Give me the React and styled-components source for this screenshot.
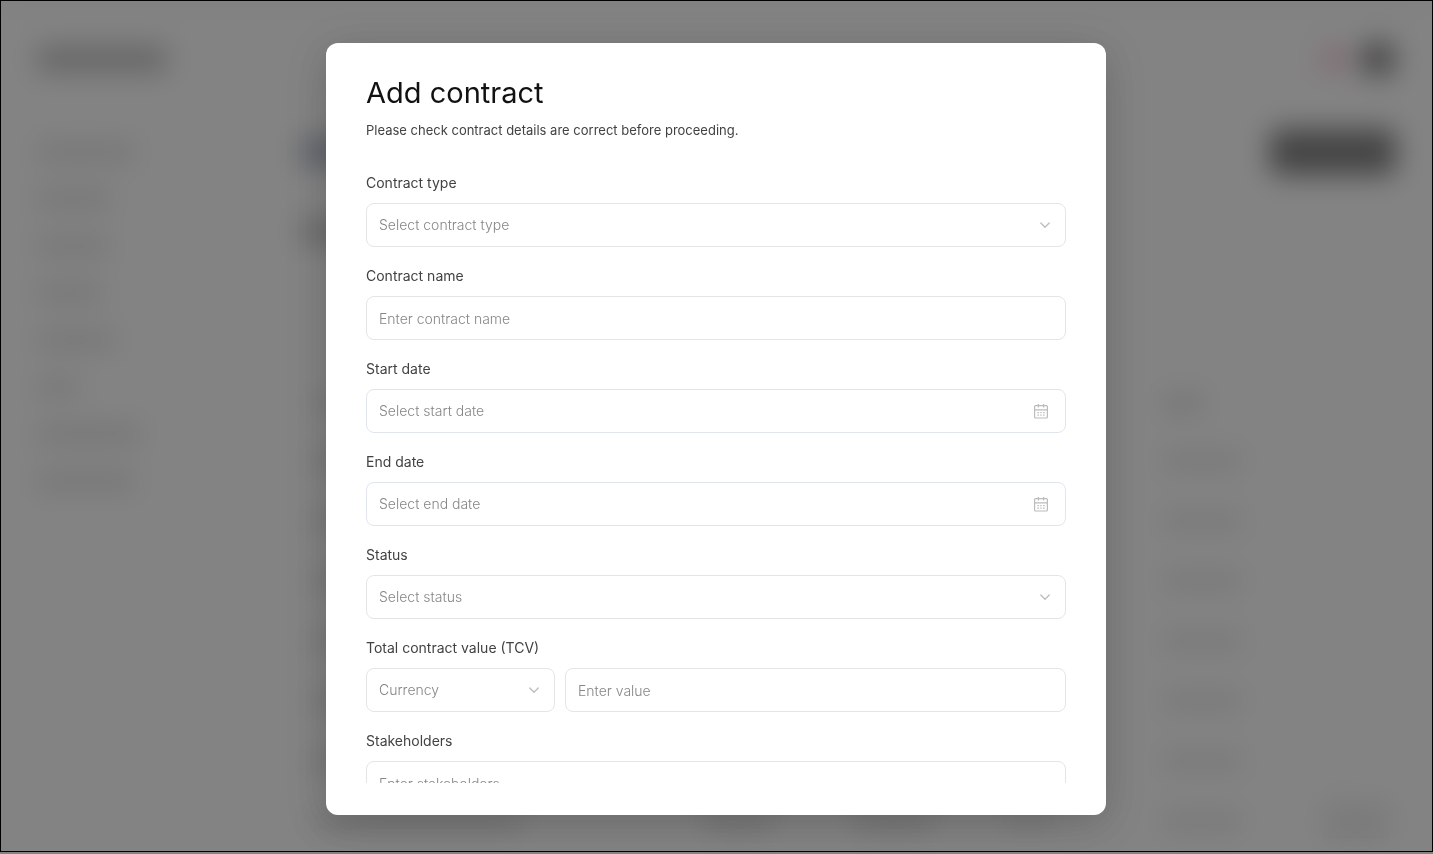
import React from "react";
import styled, { createGlobalStyle } from "styled-components";

const GlobalStyle = createGlobalStyle`
  * {
    box-sizing: border-box;
  }

  body {
    margin: 0;
    background: #838383;
    font-family: Inter, "Liberation Sans", sans-serif;
    font-size: 14px;
    color: #424242;
  }
`;

// App shell: the page and the modal layer share one grid cell
const Frame = styled.div`
  display: grid;
  grid-template-columns: minmax(0, 1fr);
  grid-template-rows: minmax(0, 1fr);
  height: calc(100vh - 2px);
  border: 1px solid #000;
  overflow: hidden;
`;

const Page = styled.div`
  grid-area: 1 / 1;
  display: flex;
  flex-direction: column;
  background: #fff;
  overflow: hidden;
`;

const TopBar = styled.header`
  display: flex;
  justify-content: space-between;
  align-items: center;
  height: 116px;
  flex: none;
  padding: 0 36px;
`;

const UserArea = styled.div`
  display: flex;
  align-items: center;
  gap: 12px;
`;

const Badge = styled.span`
  width: 28px;
  height: 24px;
  border-radius: 12px;
  background: #f08ca2;
`;

const Avatar = styled.span`
  width: 36px;
  height: 36px;
  border-radius: 50%;
  background: #0c0c0c;
`;

const Columns = styled.div`
  display: flex;
  flex: 1;
`;

const SideNav = styled.nav`
  display: flex;
  flex-direction: column;
  gap: 29px;
  width: 260px;
  flex: none;
  padding: 26px 36px;
`;

const Main = styled.main`
  flex: 1;
  display: flex;
  flex-direction: column;
  padding: 12px 36px 0 40px;
`;

const MainHead = styled.div`
  display: flex;
  justify-content: space-between;
  align-items: center;
`;

const Action = styled.span`
  width: 126px;
  height: 46px;
  border-radius: 8px;
  background: #080808;
`;

const Section = styled.div`
  padding: 44px 0 130px;
`;

const Row = styled.div`
  display: grid;
  grid-template-columns: 390px 150px 150px 160px 160px 1fr;
  align-items: center;
  height: ${(props) => (props.$head ? 56 : 60)}px;
  flex: none;
  padding-left: 12px;
`;

const Bar = styled.span`
  display: block;
  width: ${(props) => props.$w}px;
  height: ${(props) => props.$h || 18}px;
  border-radius: 4px;
  background: ${(props) => props.$color || "#000"};
  opacity: ${(props) => props.$tone};
`;

const Backdrop = styled.div`
  grid-area: 1 / 1;
  z-index: 1;
  display: flex;
  justify-content: center;
  padding: 42px 25px 36px 24px;
  background: rgba(90, 90, 90, 0.75);
  backdrop-filter: blur(14px);
`;

const Dialog = styled.section`
  display: flex;
  flex-direction: column;
  width: 100%;
  max-width: 780px;
  padding: 33px 40px 32px;
  border-radius: 12px;
  background: #fff;
  box-shadow: 0 8px 40px rgba(0, 0, 0, 0.2);
`;

const Scroller = styled.div`
  flex: 1;
  min-height: 0;
  overflow-y: auto;
  scrollbar-width: none;
`;

const Title = styled.h1`
  margin: 0;
  font-size: 29px;
  font-weight: 400;
  line-height: 34px;
  color: #111;
`;

const Subtitle = styled.p`
  margin: 12px 0 35px;
  font-size: 13px;
  line-height: 17px;
`;

const Form = styled.form`
  display: flex;
  flex-direction: column;
  gap: 20px;
`;

const Field = styled.div`
  display: flex;
  flex-direction: column;
  gap: 12px;
`;

const Label = styled.label`
  line-height: 17px;
`;

const Control = styled.div`
  display: flex;
  align-items: center;
  flex: ${(props) => props.$flex || "none"};
  min-width: 0;
  height: 44px;
  border: 1px solid ${(props) => (props.$date ? "#e0e5ee" : "#e5e5e5")};
  border-radius: 8px;
`;

const Input = styled.input`
  flex: 1;
  min-width: 0;
  height: 100%;
  padding: ${(props) => (props.$date ? "0 12px 2px" : "0 12px")};
  border: 0;
  outline: 0;
  background: transparent;
  font: inherit;
  font-weight: 300;
  color: #424242;

  &::placeholder {
    color: #868686;
    opacity: 1;
  }
`;

const SelectBox = styled(Control)`
  display: grid;
  grid-template-columns: minmax(0, 1fr);

  > * {
    grid-area: 1 / 1;
  }

  > svg {
    justify-self: end;
    margin-right: 13px;
    pointer-events: none;
  }
`;

const Select = styled.select`
  appearance: none;
  width: 100%;
  height: 100%;
  padding: 0 36px 2px 12px;
  border: 0;
  outline: 0;
  background: transparent;
  font: inherit;
  font-weight: 300;
  color: #868686;
`;

const IconButton = styled.button`
  display: flex;
  padding: 0;
  margin-right: 16px;
  border: 0;
  background: none;
`;

const Split = styled.div`
  display: flex;
  gap: 10px;
`;

const Chevron = () => (
  <svg width="14" height="14" viewBox="0 0 14 14" fill="none" stroke="#bcbcbc" strokeWidth="1.3" strokeLinecap="round" strokeLinejoin="round">
    <path d="M2.8 5 7 9.2 11.2 5" />
  </svg>
);

const CalendarIcon = () => (
  <svg width="16" height="16" viewBox="0 0 16 16" fill="none" stroke="#bcbcbc" strokeWidth="1.2">
    <rect x="1.6" y="2.6" width="12.8" height="12.4" rx="1" />
    <path d="M1.5 6.9h13M5.4 1v3.6M10.6 1v3.6" />
    <path d="M4.4 9.6h1.5M7.3 9.6h1.4M10.1 9.6h1.5M4.4 12.2h1.5M7.3 12.2h1.4M10.1 12.2h1.5" />
  </svg>
);

const SelectField = ({ id, label, placeholder, flex }) => (
  <SelectBox $flex={flex}>
    <Select id={id} aria-label={label} defaultValue="">
      <option value="">{placeholder}</option>
    </Select>
    <Chevron />
  </SelectBox>
);

const TextField = ({ id, label, placeholder, flex }) => (
  <Control $flex={flex}>
    <Input id={id} aria-label={label} placeholder={placeholder} />
  </Control>
);

const DateField = ({ id, placeholder }) => (
  <Control $date>
    <Input id={id} placeholder={placeholder} $date />
    <IconButton type="button" aria-label={placeholder}>
      <CalendarIcon />
    </IconButton>
  </Control>
);

const navWidths = [98, 74, 72, 66, 78, 42, 104, 98];
const rows = [0, 1, 2, 3, 4, 5, 6];

const Background = () => (
  <Page aria-hidden="true">
    <TopBar>
      <Bar $w={130} $h={26} $tone={0.46} />
      <UserArea>
        <Badge />
        <Avatar />
      </UserArea>
    </TopBar>
    <Columns>
      <SideNav>
        {navWidths.map((w, i) => (
          <Bar key={i} $w={w} $tone={0.22} />
        ))}
      </SideNav>
      <Main>
        <MainHead>
          <Bar $w={150} $h={28} $color="#1f3a68" $tone={0.7} />
          <Action />
        </MainHead>
        <Section>
          <Bar $w={220} $h={26} $tone={0.4} />
        </Section>
        <Row $head>
          <Bar $w={60} $tone={0.2} />
          <Bar $w={60} $tone={0.2} />
          <Bar $w={60} $tone={0.2} />
          <Bar $w={60} $tone={0.2} />
          <Bar $w={40} $tone={0.24} />
        </Row>
        {rows.map((row) => (
          <Row key={row}>
            <Bar $w={210} $tone={0.24} />
            <Bar $w={70} $tone={0.24} />
            <Bar $w={80} $tone={0.24} />
            <Bar $w={50} $color="#4a3410" $tone={0.16} />
            <Bar $w={78} $tone={0.18} />
            <Bar $w={row === 6 ? 66 : 24} $h={row === 6 ? 36 : 18} $tone={row === 6 ? 0.14 : 0.03} />
          </Row>
        ))}
      </Main>
    </Columns>
  </Page>
);

const AddContractDialog = () => (
  <Dialog role="dialog" aria-modal="true" aria-labelledby="dialog-title">
    <Scroller>
      <Title id="dialog-title">Add contract</Title>
      <Subtitle>Please check contract details are correct before proceeding.</Subtitle>
      <Form>
        <Field>
          <Label htmlFor="type">Contract type</Label>
          <SelectField id="type" placeholder="Select contract type" />
        </Field>
        <Field>
          <Label htmlFor="name">Contract name</Label>
          <TextField id="name" placeholder="Enter contract name" />
        </Field>
        <Field>
          <Label htmlFor="start">Start date</Label>
          <DateField id="start" placeholder="Select start date" />
        </Field>
        <Field>
          <Label htmlFor="end">End date</Label>
          <DateField id="end" placeholder="Select end date" />
        </Field>
        <Field>
          <Label htmlFor="status">Status</Label>
          <SelectField id="status" placeholder="Select status" />
        </Field>
        <Field>
          <Label htmlFor="value">Total contract value (TCV)</Label>
          <Split>
            <SelectField id="currency" label="Currency" placeholder="Currency" flex="0 0 189px" />
            <TextField id="value" placeholder="Enter value" flex="1" />
          </Split>
        </Field>
        <Field>
          <Label htmlFor="stakeholders">Stakeholders</Label>
          <TextField id="stakeholders" placeholder="Enter stakeholders" />
        </Field>
      </Form>
    </Scroller>
  </Dialog>
);

export default function App() {
  return (
    <>
      <GlobalStyle />
      <Frame>
        <Background />
        <Backdrop>
          <AddContractDialog />
        </Backdrop>
      </Frame>
    </>
  );
}
